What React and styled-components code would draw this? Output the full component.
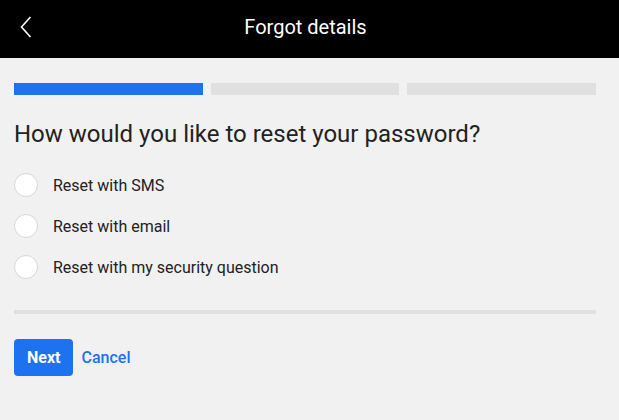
import React, { useState } from "react";
import styled, { createGlobalStyle } from "styled-components";

const Global = createGlobalStyle`
  html, body { margin: 0; padding: 0; background: #f1f1f1; }
  body { font-family: Roboto, "Liberation Sans", Arial, sans-serif; }
  * { box-sizing: border-box; }
`;

const Page = styled.div`
  width: 619px;
  min-height: 420px;
  background: #f1f1f1;
`;

const Header = styled.header`
  height: 58px;
  background: #000;
  display: flex;
  align-items: center;
  justify-content: center;
  padding-right: 8px;
  position: relative;
`;

const BackButton = styled.button`
  position: absolute;
  left: 14px;
  top: 13px;
  width: 24px;
  height: 28px;
  padding: 0;
  border: 0;
  background: transparent;
  display: flex;
  align-items: center;
  justify-content: center;
  cursor: pointer;
`;

const Title = styled.h1`
  margin: 0 0 4px;
  color: #fff;
  font-size: 20px;
  font-weight: 400;
  letter-spacing: 0;
`;

const Content = styled.main`
  padding: 25px 23px 0 14px;
`;

const Steps = styled.div`
  display: grid;
  grid-template-columns: repeat(3, 1fr);
  gap: 8px;
`;

const Step = styled.div`
  height: 12px;
  background: ${(p) => (p.$active ? "#1d72f0" : "#e0e0e0")};
`;

const Question = styled.h2`
  margin: 24px 0 24px;
  font-size: 24px;
  font-weight: 400;
  color: #222;
  line-height: 30px;
`;

const Options = styled.div`
  display: flex;
  flex-direction: column;
  gap: 17px;
`;

const Option = styled.label`
  display: flex;
  align-items: center;
  gap: 15px;
  height: 24px;
  font-size: 16px;
  color: #222;
  cursor: pointer;
`;

const Radio = styled.span`
  width: 24px;
  height: 24px;
  border-radius: 50%;
  background: #fff;
  border: 1px solid #d3d6de;
  flex-shrink: 0;
  display: flex;
  align-items: center;
  justify-content: center;
  &::after {
    content: "";
    width: 12px;
    height: 12px;
    border-radius: 50%;
    background: ${(p) => (p.$checked ? "#1d72f0" : "transparent")};
  }
`;

const Divider = styled.hr`
  margin: 31px 0 0;
  border: 0;
  height: 4px;
  background: #e0e0e0;
`;

const Actions = styled.div`
  display: flex;
  align-items: center;
  gap: 8px;
  margin-top: 25px;
`;

const PrimaryButton = styled.button`
  height: 37px;
  padding: 0 13px;
  border: 0;
  border-radius: 4px;
  background: #1d72f0;
  color: #fff;
  font-family: inherit;
  font-size: 16px;
  font-weight: 700;
  cursor: pointer;
`;

const LinkButton = styled.button`
  border: 0;
  padding: 0;
  background: transparent;
  color: #1d72f0;
  font-family: inherit;
  font-size: 16px;
  font-weight: 500;
  cursor: pointer;
`;

const options = [
  "Reset with SMS",
  "Reset with email",
  "Reset with my security question",
];

export default function App() {
  const [selected, setSelected] = useState(null);
  return (
    <Page>
      <Global />
      <Header>
        <BackButton aria-label="Back">
          <svg width="12" height="22" viewBox="0 0 12 22" fill="none">
            <path d="M10.5 1 L1.5 11 L10.5 21" stroke="#fff" strokeWidth="1.6" />
          </svg>
        </BackButton>
        <Title>Forgot details</Title>
      </Header>
      <Content>
        <Steps>
          <Step $active />
          <Step />
          <Step />
        </Steps>
        <Question>How would you like to reset your password?</Question>
        <Options>
          {options.map((o, i) => (
            <Option key={o} onClick={() => setSelected(i)}>
              <Radio $checked={selected === i} />
              {o}
            </Option>
          ))}
        </Options>
        <Divider />
        <Actions>
          <PrimaryButton>Next</PrimaryButton>
          <LinkButton>Cancel</LinkButton>
        </Actions>
      </Content>
    </Page>
  );
}
